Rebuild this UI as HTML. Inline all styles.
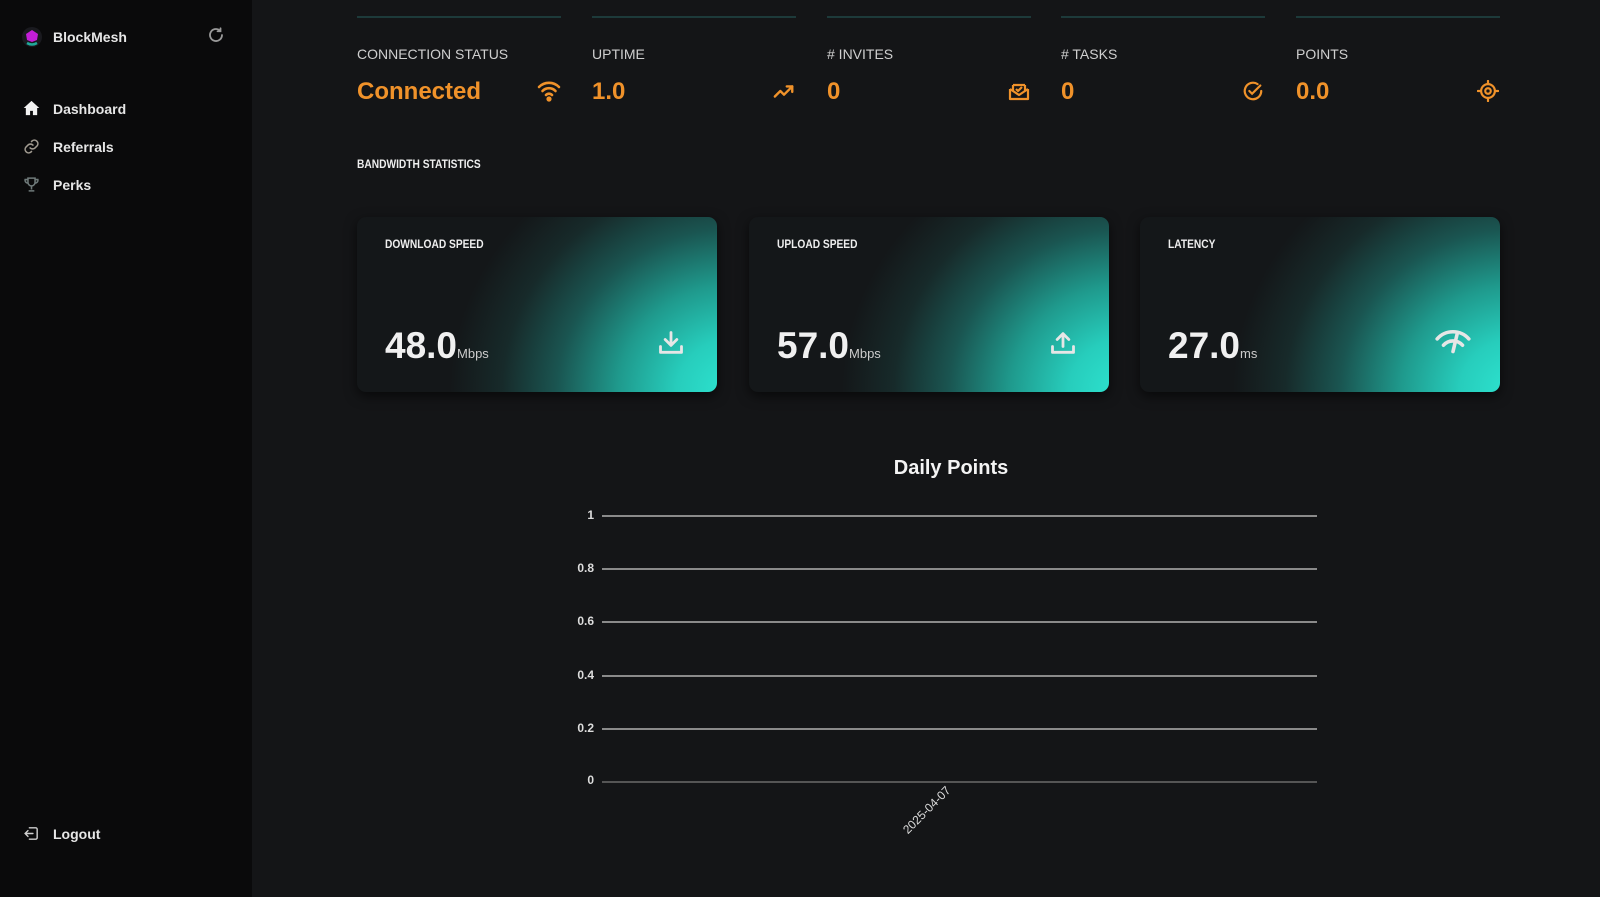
<!DOCTYPE html>
<html><head><meta charset="utf-8"><style>
*{margin:0;padding:0;box-sizing:border-box}
body{width:1600px;height:897px;background:#141517;font-family:"Liberation Sans",sans-serif;position:relative;overflow:hidden;color:#ddd}
.side{position:absolute;left:0;top:0;width:252px;height:897px;background:#0a0a0b}
.abs{position:absolute}
.nav{position:absolute;left:53px;font-size:14px;font-weight:bold;color:#e6e6e6}
.ico{position:absolute;left:23px}
.line{position:absolute;top:16px;height:2px;width:204px;background:#1d3a3a}
.lbl{position:absolute;top:46px;font-size:14px;color:#cfcfcf}
.val{position:absolute;top:78px;font-size:24px;color:#f0922a;font-weight:bold}
.card{position:absolute;top:217px;width:360px;height:175px;border-radius:9px;overflow:hidden;background:#141719;box-shadow:0 4px 12px rgba(0,0,0,.6)}
.card .g{position:absolute;inset:0;background:radial-gradient(ellipse 90% 170% at 105% 100%,#2ee6d2 0%,#27cdbc 18%,#1f9a8d 36%,#1a5551 55%,#172a2a 72%,rgba(20,23,25,0) 88%)}
.card .t{position:absolute;left:28px;top:20px;font-family:"Liberation Sans Narrow","Liberation Sans",sans-serif;font-weight:bold;font-size:12px;color:#eee;transform:scaleX(.85);transform-origin:left}
.card .n{position:absolute;left:28px;top:108px;font-size:37px;color:#f0f0f0;font-weight:bold}
.card .n small{font-size:13px;color:#ccc;font-weight:normal}
.card svg{position:absolute;top:112px}
.grid{position:absolute;left:602px;width:715px;height:2px;background:#8a8a8a}
.yl{position:absolute;right:1006px;font-size:12px;color:#ddd;font-weight:bold}
</style></head><body>
<div class="side">
 <svg class="abs" style="left:21px;top:26px" width="22" height="22" viewBox="0 0 22 22"><circle cx="11" cy="11" r="10" fill="#1a1a1f"/><polygon points="11,4 17,8 16,14 11,16 6,14 5,8" fill="#c31ed8"/><path d="M6 17 Q11 20 16 17" stroke="#1fa99a" stroke-width="2.5" fill="none"/></svg>
 <div class="nav" style="top:29px">BlockMesh</div>
 <svg class="abs" style="left:207px;top:26px" width="18" height="18" viewBox="0 0 24 24" fill="none" stroke="#9a9a9a" stroke-width="2.4" stroke-linecap="round"><path d="M20 12a8 8 0 1 1-3-6.2"/><path d="M18 3v4h-4"/></svg>
 <svg class="ico" style="top:100px" width="17" height="16" viewBox="0 0 24 22"><path d="M12 1L1 11h3v10h6v-6h4v6h6V11h3z" fill="#f2f2f2"/></svg>
 <div class="nav" style="top:101px">Dashboard</div>
 <svg class="ico" style="top:138px" width="17" height="17" viewBox="0 0 24 24" fill="none" stroke="#a09a90" stroke-width="2.2" stroke-linecap="round"><path d="M10 14a5 5 0 0 0 7 0l3-3a5 5 0 0 0-7-7l-1 1"/><path d="M14 10a5 5 0 0 0-7 0l-3 3a5 5 0 0 0 7 7l1-1"/></svg>
 <div class="nav" style="top:139px">Referrals</div>
 <svg class="ico" style="top:176px" width="17" height="17" viewBox="0 0 24 24" fill="none" stroke="#6f7a7a" stroke-width="2.2"><path d="M7 3h10v6a5 5 0 0 1-10 0z"/><path d="M7 5H3a4 4 0 0 0 4 5M17 5h4a4 4 0 0 1-4 5M12 14v5M8 21h8"/></svg>
 <div class="nav" style="top:177px">Perks</div>
 <svg class="ico" style="top:825px" width="17" height="17" viewBox="0 0 24 24" fill="none" stroke="#cfcfcf" stroke-width="2" stroke-linecap="round"><path d="M9 4h9a2 2 0 0 1 2 2v12a2 2 0 0 1-2 2H9"/><path d="M14 12H3M7 8l-4 4 4 4"/></svg>
 <div class="nav" style="top:826px">Logout</div>
</div>

<div class="line" style="left:357px"></div><div class="line" style="left:592px"></div><div class="line" style="left:827px"></div><div class="line" style="left:1061px"></div><div class="line" style="left:1296px"></div>
<div class="lbl" style="left:357px">CONNECTION STATUS</div>
<div class="lbl" style="left:592px">UPTIME</div>
<div class="lbl" style="left:827px"># INVITES</div>
<div class="lbl" style="left:1061px"># TASKS</div>
<div class="lbl" style="left:1296px">POINTS</div>
<div class="val" style="left:357px">Connected</div>
<div class="val" style="left:592px">1.0</div>
<div class="val" style="left:827px">0</div>
<div class="val" style="left:1061px">0</div>
<div class="val" style="left:1296px">0.0</div>
<svg class="abs" style="left:537px;top:80px" width="24" height="22" viewBox="0 0 24 22" fill="none" stroke="#f0922a" stroke-width="2.6" stroke-linecap="round"><path d="M2 7a14 14 0 0 1 20 0"/><path d="M5.5 11a9 9 0 0 1 13 0"/><path d="M9 15a4 4 0 0 1 6 0"/><circle cx="12" cy="19" r="1.3" fill="#f0922a"/></svg>
<svg class="abs" style="left:773px;top:82px" width="22" height="18" viewBox="0 0 24 18" fill="none" stroke="#f0922a" stroke-width="2.6" stroke-linecap="round" stroke-linejoin="round"><path d="M2 15l6-6 4 4 9-9"/><path d="M15 4h6v6"/></svg>
<svg class="abs" style="left:1007px;top:80px" width="24" height="22" viewBox="0 0 24 22" fill="none" stroke="#f0922a" stroke-width="2.2" stroke-linejoin="round"><path d="M3 9v10h18V9"/><path d="M3 9l9 6 9-6"/><path d="M6 5v6M18 5v6M6 5h12"/><path d="M9 9l2 2 4-4"/></svg>
<svg class="abs" style="left:1242px;top:80px" width="22" height="22" viewBox="0 0 24 24" fill="none" stroke="#f0922a" stroke-width="2.4" stroke-linecap="round"><path d="M21 12a9 9 0 1 1-4-7.5"/><path d="M8 12l3 3 9-9"/></svg>
<svg class="abs" style="left:1477px;top:80px" width="22" height="22" viewBox="0 0 24 24" fill="none" stroke="#f0922a" stroke-width="2.4" stroke-linecap="round"><circle cx="12" cy="12" r="7.5"/><circle cx="12" cy="12" r="3"/><path d="M12 1v3M12 20v3M1 12h3M20 12h3"/></svg>

<div class="abs" style="left:357px;top:157px;font-family:'Liberation Sans Narrow','Liberation Sans',sans-serif;font-weight:bold;font-size:12px;color:#eee;transform:scaleX(.85);transform-origin:left">BANDWIDTH STATISTICS</div>

<div class="card" style="left:357px"><div class="g"></div><div class="t">DOWNLOAD SPEED</div><div class="n">48.0<small>Mbps</small></div>
<svg style="left:300px" width="28" height="28" viewBox="0 0 24 24" fill="none" stroke="#e6e6e6" stroke-width="2.4" stroke-linecap="round" stroke-linejoin="round"><path d="M12 3v11M7 9l5 5 5-5M3 15v5h18v-5"/></svg></div>
<div class="card" style="left:749px"><div class="g"></div><div class="t">UPLOAD SPEED</div><div class="n">57.0<small>Mbps</small></div>
<svg style="left:300px" width="28" height="28" viewBox="0 0 24 24" fill="none" stroke="#e6e6e6" stroke-width="2.4" stroke-linecap="round" stroke-linejoin="round"><path d="M12 15V4M7 9l5-5 5 5M3 15v5h18v-5"/></svg></div>
<div class="card" style="left:1140px"><div class="g"></div><div class="t">LATENCY</div><div class="n">27.0<small>ms</small></div>
<svg style="left:294px;top:110px" width="38" height="28" viewBox="0 0 36 26" fill="none" stroke="#e6e6e6" stroke-width="3.4" stroke-linecap="round"><path d="M3 11a20 20 0 0 1 30 0"/><path d="M9 17a12 12 0 0 1 18 0"/><path d="M22 6l-4 17"/></svg></div>

<div class="abs" style="left:851px;top:457px;width:200px;text-align:center;font-size:20px;font-weight:bold;color:#f4f4f4">Daily Points</div>
<div class="grid" style="top:515px"></div><div class="grid" style="top:568px"></div><div class="grid" style="top:621px"></div><div class="grid" style="top:675px"></div><div class="grid" style="top:728px"></div><div class="grid" style="top:781px;background:#555"></div>
<div class="yl" style="top:508px">1</div><div class="yl" style="top:561px">0.8</div><div class="yl" style="top:614px">0.6</div><div class="yl" style="top:668px">0.4</div><div class="yl" style="top:721px">0.2</div><div class="yl" style="top:773px">0</div>
<div class="abs" style="left:896px;top:803px;font-size:12px;color:#ddd;transform:rotate(-45deg);transform-origin:center">2025-04-07</div>
</body></html>
